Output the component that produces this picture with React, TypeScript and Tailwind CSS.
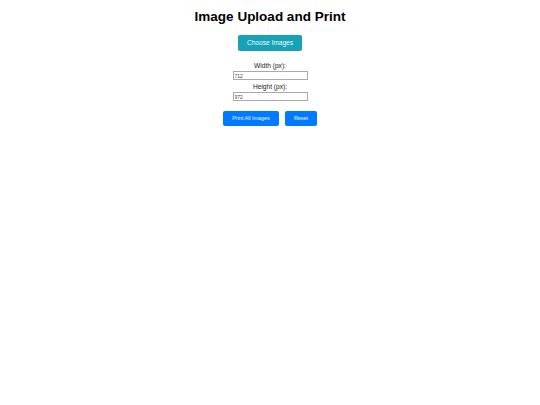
export default function App() {
  return (
    <div className="min-h-[405px] w-[540px] bg-white flex flex-col items-center pt-[9px]" style={{ fontFamily: '"Liberation Sans", Arial, sans-serif' }}>
      <h1 className="text-[13.5px] leading-[16px] font-bold text-black m-0">Image Upload and Print</h1>
      <button className="mt-[10px] h-[16px] w-[64px] bg-[#17a2b8] text-[#eef9fb] text-[6.6px] leading-none rounded-[2px]">Choose Images</button>
      <div className="mt-[11px] flex flex-col items-center">
        <label className="text-[6.6px] leading-[8px] text-[#222]">Width (px):</label>
        <input className="mt-[1px] w-[75px] h-[9px] border-[0.5px] border-[#a9a9a9] text-[5px] text-[#444] px-[1px] leading-none outline-none" defaultValue="712" />
        <label className="mt-[3px] text-[6.6px] leading-[8px] text-[#222]">Height (px):</label>
        <input className="mt-[1px] w-[75px] h-[9px] border-[0.5px] border-[#a9a9a9] text-[5px] text-[#444] px-[1px] leading-none outline-none" defaultValue="972" />
      </div>
      <div className="mt-[10px] flex gap-[6px]">
        <button className="h-[15px] w-[56px] bg-[#007bff] text-[#eef5ff] text-[5.4px] leading-none rounded-[2px]">Print All Images</button>
        <button className="h-[15px] w-[32px] bg-[#007bff] text-[#eef5ff] text-[5.4px] leading-none rounded-[2px]">Reset</button>
      </div>
    </div>
  );
}
